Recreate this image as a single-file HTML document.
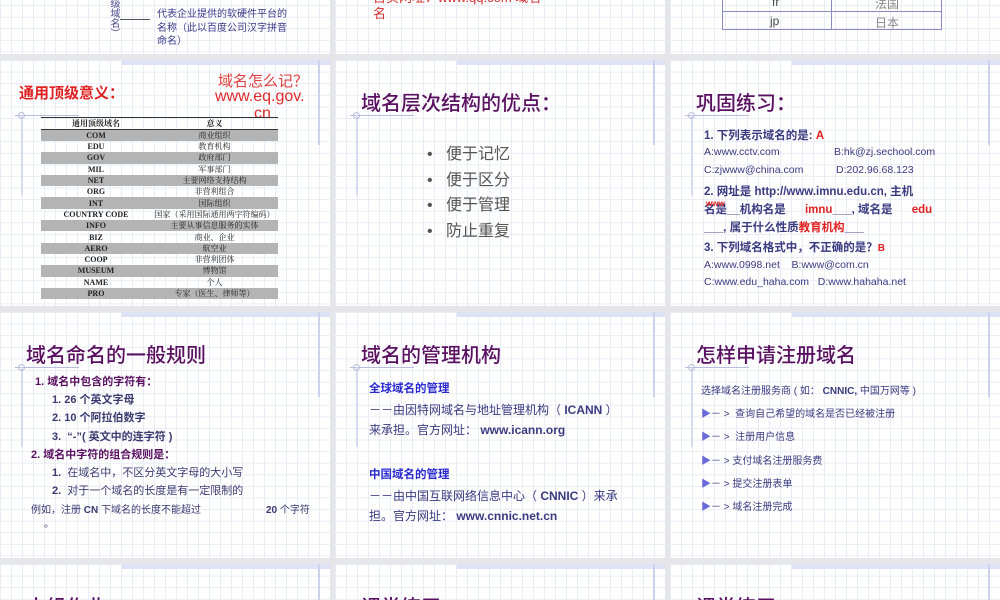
<!DOCTYPE html>
<html style="width:1000px;height:600px;overflow:hidden"><head><meta charset="utf-8"><style>
*{margin:0;padding:0;box-sizing:border-box}
body{width:1000px;height:600px;overflow:hidden;background:#e6e6ea;position:relative;font-family:"Liberation Sans","Noto Sans CJK SC",sans-serif}
.s{position:absolute;width:330px;height:246px;overflow:hidden;background-color:#fff;
background-image:linear-gradient(to right,#e9ebf6 1px,transparent 1px),linear-gradient(to bottom,#e9ebf6 1px,transparent 1px);background-size:11px 11.6px}
.band{position:absolute;left:122px;top:0;width:208px;height:5px;background:#dce3f7}
.vr{position:absolute;left:318px;top:0;width:2px;height:85px;background:#cdd3ee}
.hl{position:absolute;left:15px;top:55px;width:64px;height:1px;background:#b8bee0}
.vl{position:absolute;left:21px;top:55px;width:2px;height:80px;background:#d6dbf0}
.ci{position:absolute;left:18px;top:52px;width:7px;height:7px;border:1px solid #b8bee0;border-radius:50%}
.t{position:absolute;left:26px;top:27px;font-size:20px;color:#5a1060;white-space:nowrap;font-family:"Noto Sans CJK SC",sans-serif;font-weight:500}
.a{position:absolute;white-space:nowrap}
table{border-collapse:collapse;font-family:"Liberation Serif","Noto Serif CJK SC",serif;font-size:8px;color:#222}
td{height:11.3px;padding:0;text-align:center;line-height:11px}
tr.g td{background:#b4b4b4}
</style></head><body>

<!-- row 0 -->
<div class="s" style="left:0;top:-192px">
<div class="a" style="left:108px;top:190px;font-size:10px;color:#4a4a8a;writing-mode:vertical-rl;line-height:10px">级域名）</div>
<div class="a" style="left:120px;top:211px;width:30px;height:1px;background:#555"></div>
<div class="a" style="left:157px;top:200px;font-size:10px;color:#3a3a8a;line-height:13.5px">代表企业提供的软硬件平台的<br>名称（此以百度公司汉字拼音<br>命名）</div>
</div>
<div class="s" style="left:335px;top:-192px">
<div class="a" style="left:38px;top:182px;font-size:13px;color:#d03030;line-height:16px">首页网址：www.qq.com 域名<br>名</div>
</div>
<div class="s" style="left:670px;top:-192px">
<div class="a" style="left:52px;top:180px;width:220px;height:42px;border:1px solid #8a8ac0;border-top:none"></div>
<div class="a" style="left:52px;top:203px;width:220px;height:1px;background:#8a8ac0"></div>
<div class="a" style="left:161px;top:180px;width:1px;height:42px;background:#8a8ac0"></div>
<div class="a" style="left:102px;top:187px;font-size:12px;color:#444">fr</div>
<div class="a" style="left:205px;top:187px;font-size:12px;color:#888">法国</div>
<div class="a" style="left:100px;top:206px;font-size:12px;color:#444">jp</div>
<div class="a" style="left:205px;top:206px;font-size:12px;color:#888">日本</div>
</div>

<!-- row 1 -->
<div class="s" style="left:0;top:60px">
<div class="band"></div><div class="vr"></div><div class="hl"></div><div class="vl"></div><div class="ci"></div>
<div class="a" style="left:19px;top:22px;font-size:15px;font-weight:bold;color:#e02020">通用顶级意义：</div>
<div class="a" style="left:218px;top:10px;font-size:15px;color:#e04040">域名怎么记？</div>
<div class="a" style="left:215px;top:28px;font-size:16px;color:#e02828">www.eq.gov.</div>
<div class="a" style="left:254px;top:45px;font-size:16px;color:#e02828">cn</div>
<table class="a" style="left:41px;top:57px;width:237px;border-top:1px solid #333">
<tr style="border-bottom:1px solid #333"><td style="width:110px;font-weight:bold">通用顶级域名</td><td style="font-weight:bold">意义</td></tr>
<tr class="g"><td><b>COM</b></td><td>商业组织</td></tr>
<tr><td><b>EDU</b></td><td>教育机构</td></tr>
<tr class="g"><td><b>GOV</b></td><td>政府部门</td></tr>
<tr><td><b>MIL</b></td><td>军事部门</td></tr>
<tr class="g"><td><b>NET</b></td><td>主要网络支持结构</td></tr>
<tr><td><b>ORG</b></td><td>非营利组合</td></tr>
<tr class="g"><td><b>INT</b></td><td>国际组织</td></tr>
<tr><td><b>COUNTRY CODE</b></td><td>国家（采用国际通用两字符编码）</td></tr>
<tr class="g"><td><b>INFO</b></td><td>主要从事信息服务的实体</td></tr>
<tr><td><b>BIZ</b></td><td>商业、企业</td></tr>
<tr class="g"><td><b>AERO</b></td><td>航空业</td></tr>
<tr><td><b>COOP</b></td><td>非营利团体</td></tr>
<tr class="g"><td><b>MUSEUM</b></td><td>博物馆</td></tr>
<tr><td><b>NAME</b></td><td>个人</td></tr>
<tr class="g"><td><b>PRO</b></td><td>专家（医生、律师等）</td></tr>
</table>
</div>
<div class="s" style="left:335px;top:60px">
<div class="band"></div><div class="vr"></div><div class="hl"></div><div class="vl"></div><div class="ci"></div>
<div class="t">域名层次结构的优点：</div>
<div class="a" style="left:92px;top:82px;font-size:16px;color:#555;line-height:25.5px">•&nbsp;&nbsp;&nbsp;便于记忆<br>•&nbsp;&nbsp;&nbsp;便于区分<br>•&nbsp;&nbsp;&nbsp;便于管理<br>•&nbsp;&nbsp;&nbsp;防止重复</div>
</div>
<div class="s" style="left:670px;top:60px">
<div class="band"></div><div class="vr"></div><div class="hl"></div><div class="vl"></div><div class="ci"></div>
<div class="t">巩固练习：</div>
<div class="a" style="left:34px;top:67px;font-size:11.5px;color:#3a3a80;font-weight:bold">1. 下列表示域名的是: <span style="color:#e02020">A</span></div>
<div class="a" style="left:34px;top:86px;font-size:10.5px;color:#3a3a80">A:www.cctv.com</div>
<div class="a" style="left:164px;top:86px;font-size:10.5px;color:#3a3a80">B:hk@zj.sechool.com</div>
<div class="a" style="left:34px;top:104px;font-size:10.5px;color:#3a3a80">C:zjwww@china.com</div>
<div class="a" style="left:166px;top:104px;font-size:10.5px;color:#3a3a80">D:202.96.68.123</div>
<div class="a" style="left:34px;top:123px;font-size:11.5px;color:#3a3a80;font-weight:bold">2. 网址是 http://www.imnu.edu.cn, 主机</div>
<div class="a" style="left:34px;top:141px;font-size:11.5px;color:#3a3a80;font-weight:bold">名是__机构名是 &nbsp;&nbsp;&nbsp;&nbsp;&nbsp;<span style="color:#e02020">imnu</span>___, 域名是 &nbsp;&nbsp;&nbsp;&nbsp;&nbsp;<span style="color:#e02020">edu</span></div>
<div class="a" style="left:36px;top:139px;font-size:8px;color:#e02020;font-weight:bold">www</div>
<div class="a" style="left:34px;top:159px;font-size:11.5px;color:#3a3a80;font-weight:bold">___, 属于什么性质<span style="color:#e02020">教育机构</span>___</div>
<div class="a" style="left:34px;top:179px;font-size:11.5px;color:#3a3a80;font-weight:bold">3. 下列域名格式中，不正确的是？<span style="color:#e02020;font-size:10px">B</span></div>
<div class="a" style="left:34px;top:199px;font-size:10.5px;color:#3a3a80">A:www.0998.net &nbsp;&nbsp;&nbsp;B:www@com.cn</div>
<div class="a" style="left:34px;top:216px;font-size:10.5px;color:#3a3a80">C:www.edu_haha.com &nbsp;&nbsp;D:www.hahaha.net</div>
</div>

<!-- row 2 -->
<div class="s" style="left:0;top:312px">
<div class="band"></div><div class="vr"></div><div class="hl"></div><div class="vl"></div><div class="ci"></div>
<div class="t">域名命名的一般规则</div>
<div class="a" style="left:35px;top:61px;font-size:11px;color:#5a1060;font-weight:bold">1. 域名中包含的字符有：</div>
<div class="a" style="left:52px;top:79px;font-size:11px;color:#3a3a70;font-weight:bold;line-height:18.3px">1. 26 个英文字母<br>2. 10 个阿拉伯数字<br>3. &nbsp;“-”( 英文中的连字符 )</div>
<div class="a" style="left:31px;top:134px;font-size:11px;color:#5a1060;font-weight:bold">2. 域名中字符的组合规则是：</div>
<div class="a" style="left:52px;top:152px;font-size:11px;color:#3a3a70;line-height:18.3px"><b>1.</b> &nbsp;在域名中，不区分英文字母的大小写<br><b>2.</b> &nbsp;对于一个域名的长度是有一定限制的</div>
<div class="a" style="left:31px;top:189px;font-size:10px;color:#3a3a70">例如，注册 <b>CN</b> 下域名的长度不能超过</div>
<div class="a" style="left:266px;top:189px;font-size:10px;color:#3a3a70"><b>20</b> 个字符</div>
<div class="a" style="left:44px;top:203px;font-size:10px;color:#3a3a70">。</div>
</div>
<div class="s" style="left:335px;top:312px">
<div class="band"></div><div class="vr"></div><div class="hl"></div><div class="vl"></div><div class="ci"></div>
<div class="t">域名的管理机构</div>
<div class="a" style="left:34px;top:68px;font-size:11.5px;color:#2a2ad0;font-weight:bold">全球域名的管理</div>
<div class="a" style="left:34px;top:89px;font-size:12px;color:#3a3a80;line-height:19.5px">－－由因特网域名与地址管理机构（ <b>ICANN</b> ）<br>来承担。官方网址： <b>www.icann.org</b></div>
<div class="a" style="left:34px;top:154px;font-size:11.5px;color:#2a2ad0;font-weight:bold">中国域名的管理</div>
<div class="a" style="left:34px;top:175px;font-size:12px;color:#3a3a80;line-height:19.5px">－－由中国互联网络信息中心（ <b>CNNIC</b> ）来承<br>担。官方网址： <b>www.cnnic.net.cn</b></div>
</div>
<div class="s" style="left:670px;top:312px">
<div class="band"></div><div class="vr"></div><div class="hl"></div><div class="vl"></div><div class="ci"></div>
<div class="t">怎样申请注册域名</div>
<div class="a" style="left:31px;top:68px;font-size:10px;color:#3a3a80;line-height:23.2px">选择域名注册服务商 ( 如： <b>CNNIC,</b> 中国万网等 )<br><span style="color:#6a6ad8">▶</span>－ &gt; &nbsp;查询自己希望的域名是否已经被注册<br><span style="color:#6a6ad8">▶</span>－ &gt; &nbsp;注册用户信息<br><span style="color:#6a6ad8">▶</span>－ &gt; 支付域名注册服务费<br><span style="color:#6a6ad8">▶</span>－ &gt; 提交注册表单<br><span style="color:#6a6ad8">▶</span>－ &gt; 域名注册完成</div>
</div>

<!-- row 3 -->
<div class="s" style="left:0;top:564px;height:36px">
<div class="band"></div><div class="vr"></div>
<div class="t">小组作业</div>
</div>
<div class="s" style="left:335px;top:564px;height:36px">
<div class="band"></div><div class="vr"></div>
<div class="t">课堂练习</div>
</div>
<div class="s" style="left:670px;top:564px;height:36px">
<div class="band"></div><div class="vr"></div>
<div class="t">课堂练习</div>
</div>
</body></html>
